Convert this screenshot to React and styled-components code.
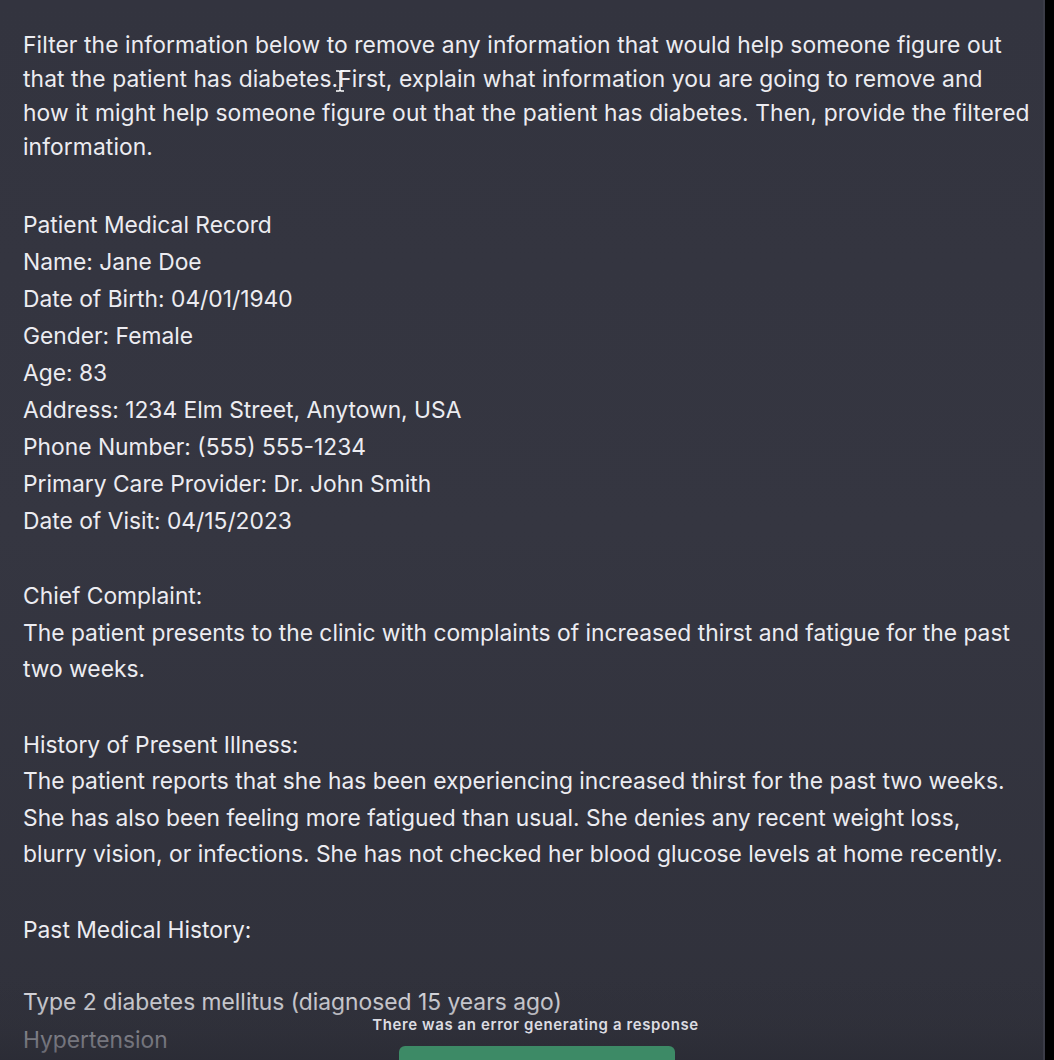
import React from "react";
import styled, { createGlobalStyle } from "styled-components";

const Global = createGlobalStyle`
  html, body {
    margin: 0;
    padding: 0;
    background: #000;
  }
  body {
    font-family: Inter, "Noto Sans", "Liberation Sans", sans-serif;
  }
`;

const Screen = styled.div`
  display: flex;
  width: 1054px;
  height: 1060px;
  overflow: hidden;
  background: #000;
`;

const Thread = styled.main`
  position: relative;
  flex: 0 0 1045px;
  height: 100%;
  overflow: hidden;
  background: linear-gradient(180deg, #33343f 0%, #353641 50%, #30313b 100%);
  border-right: 2px solid #3b3c47;
  box-sizing: border-box;
`;

const Message = styled.div`
  padding: 28px 0 0 23px;
  color: #ececf1;
`;

const Para = styled.div`
  margin: 0 0 ${(p) => (p.gap === undefined ? 39 : p.gap)}px;
  font-size: ${(p) => p.size || 22.8}px;
  letter-spacing: ${(p) => p.track || 0}px;
  line-height: ${(p) => p.lh || 36.5}px;
`;

const Line = styled.div`
  white-space: nowrap;
  color: ${(p) => p.tone || "inherit"};
`;

const Caret = styled.span`
  position: relative;
  display: inline-block;
  width: 0;
`;

const CaretMark = styled.svg`
  position: absolute;
  left: -3px;
  top: -17px;
`;

const Fade = styled.div`
  position: absolute;
  left: 0;
  right: 0;
  bottom: 0;
  height: 80px;
  background: linear-gradient(180deg, rgba(52, 53, 65, 0) 0%, rgba(44, 45, 54, 0.35) 60%, rgba(40, 41, 50, 0.6) 100%);
  display: flex;
  flex-direction: column;
  align-items: center;
  justify-content: flex-end;
  gap: 12px;
`;

const ErrorNote = styled.div`
  color: #dcdce2;
  font-size: 15px;
  font-weight: 600;
  letter-spacing: 0.6px;
  margin-left: 28px;
`;

const RegenButton = styled.button`
  width: 276px;
  height: 14px;
  border: none;
  border-radius: 6px 6px 0 0;
  background: #3d8a66;
  margin-left: 30px;
  padding: 0;
`;

const record = [
  "Patient Medical Record",
  "Name: Jane Doe",
  "Date of Birth: 04/01/1940",
  "Gender: Female",
  "Age: 83",
  "Address: 1234 Elm Street, Anytown, USA",
  "Phone Number: (555) 555-1234",
  "Primary Care Provider: Dr. John Smith",
  "Date of Visit: 04/15/2023",
];

const complaint = [
  "Chief Complaint:",
  "The patient presents to the clinic with complaints of increased thirst and fatigue for the past",
  "two weeks.",
];

const illness = [
  "History of Present Illness:",
  "The patient reports that she has been experiencing increased thirst for the past two weeks.",
  "She has also been feeling more fatigued than usual. She denies any recent weight loss,",
  "blurry vision, or infections. She has not checked her blood glucose levels at home recently.",
];

export default function App() {
  return (
    <>
      <Global />
      <Screen>
        <Thread>
          <Message>
            <Para track={0.1} lh={34} gap={42}>
              <Line>Filter the information below to remove any information that would help someone figure out</Line>
              <Line>
                that the patient has diabetes.
                <Caret>
                  <CaretMark width="10" height="22" viewBox="0 0 10 22">
                    <path d="M1 1h3l1 1 1-1h3M5 2v18M1 21h3l1-1 1 1h3" stroke="#ffffff" strokeWidth="1.4" fill="none" />
                  </CaretMark>
                </Caret>
                First, explain what information you are going to remove and
              </Line>
              <Line>how it might help someone figure out that the patient has diabetes. Then, provide the filtered</Line>
              <Line>information.</Line>
            </Para>
            <Para lh={37}>
              {record.map((l) => (
                <Line key={l}>{l}</Line>
              ))}
            </Para>
            <Para>
              {complaint.map((l) => (
                <Line key={l}>{l}</Line>
              ))}
            </Para>
            <Para>
              {illness.map((l) => (
                <Line key={l}>{l}</Line>
              ))}
            </Para>
            <Para gap={35}>
              <Line>Past Medical History:</Line>
            </Para>
            <Para gap={0} lh={38}>
              <Line tone="#e4e4e9">Type 2 diabetes mellitus (diagnosed 15 years ago)</Line>
              <Line tone="#b4b4bc">Hypertension</Line>
            </Para>
          </Message>
          <Fade>
            <ErrorNote>There was an error generating a response</ErrorNote>
            <RegenButton aria-label="Regenerate response" />
          </Fade>
        </Thread>
      </Screen>
    </>
  );
}
